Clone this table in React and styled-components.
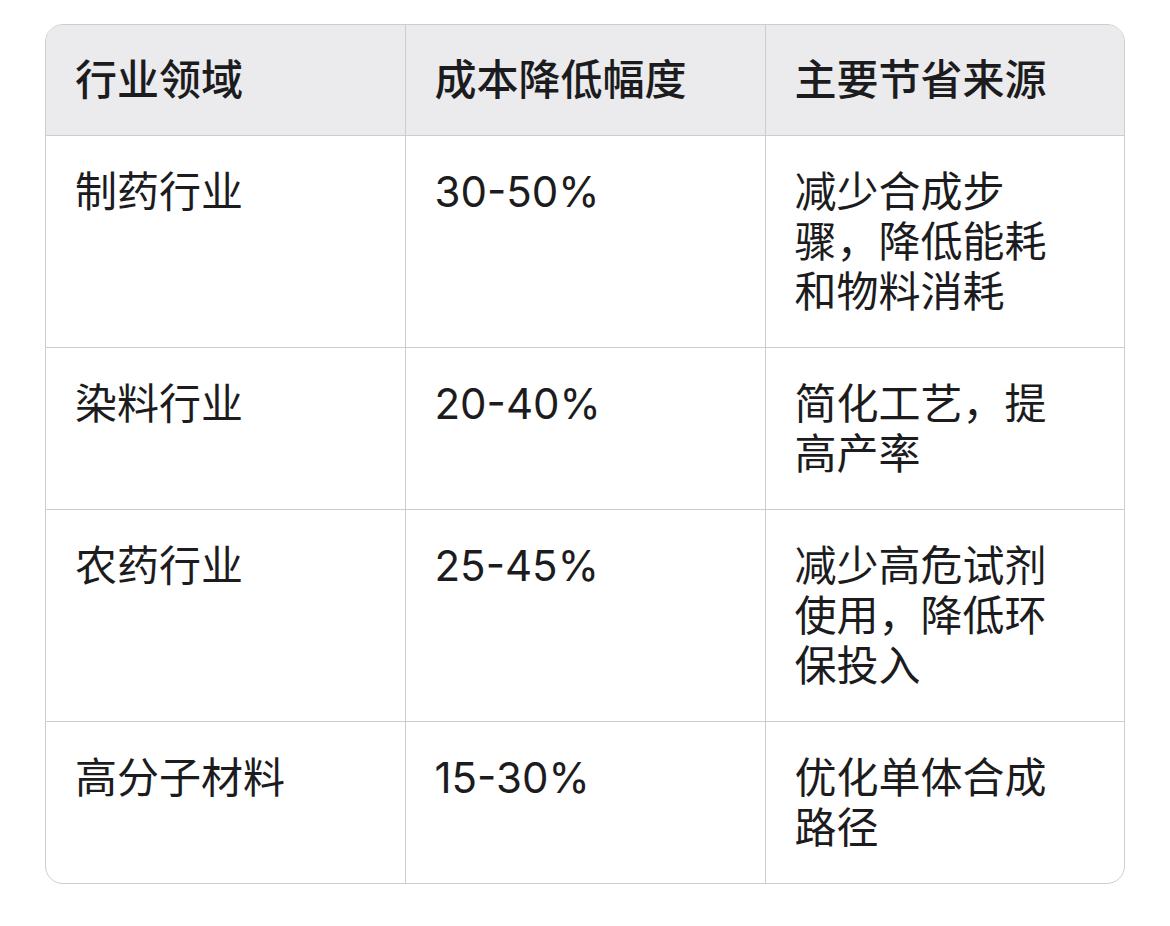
import React from "react";
import styled, { createGlobalStyle } from "styled-components";

const rows = [
  ["制药行业", "30-50%", "减少合成步骤，降低能耗和物料消耗"],
  ["染料行业", "20-40%", "简化工艺，提高产率"],
  ["农药行业", "25-45%", "减少高危试剂使用，降低环保投入"],
  ["高分子材料", "15-30%", "优化单体合成路径"],
];

export default function App() {
  return (
    <>
      <GlobalStyle />
      <Page>
        <TableWrap>
          <Table>
            <colgroup>
              <col style={{ width: 359 }} />
              <col style={{ width: 360 }} />
              <col />
            </colgroup>
            <thead>
              <tr>
                <HeadCell>行业领域</HeadCell>
                <HeadCell>成本降低幅度</HeadCell>
                <HeadCell>主要节省来源</HeadCell>
              </tr>
            </thead>
            <tbody>
              {rows.map((row) => (
                <Row key={row[0]}>
                  {row.map((cell, i) => (
                    <Cell key={i}>{cell}</Cell>
                  ))}
                </Row>
              ))}
            </tbody>
          </Table>
        </TableWrap>
      </Page>
    </>
  );
}

const GlobalStyle = createGlobalStyle`
  body {
    margin: 0;
    background: #ffffff;
    font-family: "Inter", "Noto Sans CJK SC", sans-serif;
    color: #1c1c1e;
  }
`;

const Page = styled.div`
  padding: 24px 0 0 45px;
  width: 1080px;
`;

const TableWrap = styled.div`
  border: 1px solid #cdcdd1;
  border-radius: 18px;
  overflow: hidden;
`;

const Table = styled.table`
  width: 100%;
  border-collapse: collapse;
  table-layout: fixed;
`;

const HeadCell = styled.th`
  background: #ebebed;
  text-align: left;
  font-weight: 500;
  font-size: 42px;
  line-height: 50px;
  padding: 30px 48px 30px 29px;
  border-bottom: 1px solid #cdcdd1;
  border-right: 1px solid #cdcdd1;
  &:last-child {
    border-right: none;
  }
`;

const Row = styled.tr`
  &:last-child td {
    border-bottom: none;
  }
`;

const Cell = styled.td`
  vertical-align: top;
  font-size: 42px;
  line-height: 50px;
  padding: 31px 48px 30px 29px;
  border-bottom: 1px solid #cdcdd1;
  border-right: 1px solid #cdcdd1;
  &:last-child {
    border-right: none;
  }
`;
